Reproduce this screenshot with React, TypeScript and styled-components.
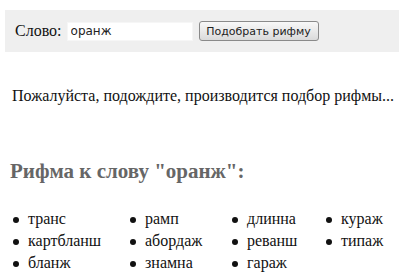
import { createGlobalStyle } from "styled-components";
import styled from "styled-components";

const GlobalStyle = createGlobalStyle`
  html, body {
    margin: 0;
    padding: 0;
    background: #ffffff;
    overflow: hidden;
  }
  body {
    font-family: "Liberation Serif", "Times New Roman", serif;
    font-size: 16px;
    color: #111111;
  }
`;

const Page = styled.div`
  width: 399px;
  height: 277px;
  overflow: hidden;
`;

const SearchBar = styled.form`
  display: flex;
  align-items: center;
  height: 42px;
  margin: 10px 0 0 5px;
  padding: 0 0 0 10px;
  background: #efefef;
`;

const Label = styled.label`
  font-size: 16px;
  margin-right: 5px;
`;

const WordInput = styled.input`
  box-sizing: border-box;
  width: 126px;
  height: 19px;
  border: 1px solid #f6f6f6;
  background: #ffffff;
  padding: 0 3px;
  font-family: "DejaVu Sans", Verdana, sans-serif;
  font-size: 12px;
  color: #222222;
  outline: none;
`;

const SubmitButton = styled.button`
  box-sizing: border-box;
  margin-left: 6px;
  width: 120px;
  height: 20px;
  border: 1px solid #8a8a8a;
  border-radius: 3px;
  background: linear-gradient(#f8f8f8, #e8e8e8 55%, #dadada);
  font-family: "DejaVu Sans", Verdana, sans-serif;
  font-size: 11px;
  color: #222222;
  padding: 0;
`;

const Waiting = styled.p`
  margin: 35px 0 0 12px;
  line-height: 18px;
`;

const Heading = styled.h2`
  margin: 54px 0 0 10px;
  font-size: 21px;
  line-height: 24px;
  font-weight: bold;
  color: #666666;
`;

const Columns = styled.div`
  display: grid;
  grid-template-columns: 117px 102px 94px auto;
  margin: 25px 0 0 28px;
`;

const RhymeList = styled.ul`
  margin: 0;
  padding: 0;
  list-style: none;
`;

const Rhyme = styled.li`
  position: relative;
  line-height: 22px;
  &::before {
    content: "";
    position: absolute;
    left: -15px;
    top: 9px;
    width: 6px;
    height: 6px;
    border-radius: 50%;
    background: #111111;
  }
`;

const columns = [
  ["транс", "картбланш", "бланж"],
  ["рамп", "абордаж", "знамна"],
  ["длинна", "реванш", "гараж"],
  ["кураж", "типаж"],
];

export default function App() {
  return (
    <Page>
      <GlobalStyle />
      <SearchBar onSubmit={(e) => e.preventDefault()}>
        <Label htmlFor="word">Слово:</Label>
        <WordInput id="word" defaultValue="оранж" />
        <SubmitButton type="submit">Подобрать рифму</SubmitButton>
      </SearchBar>
      <Waiting>Пожалуйста, подождите, производится подбор рифмы...</Waiting>
      <Heading>Рифма к слову "оранж":</Heading>
      <Columns>
        {columns.map((col, i) => (
          <RhymeList key={i}>
            {col.map((w) => (
              <Rhyme key={w}>{w}</Rhyme>
            ))}
          </RhymeList>
        ))}
      </Columns>
    </Page>
  );
}
